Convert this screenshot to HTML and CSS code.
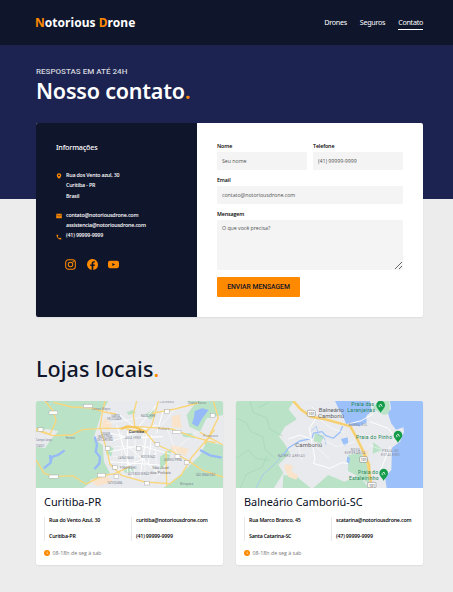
FILE: index.html
```html
<!DOCTYPE html>
<html lang="pt-BR">
<head>
<meta charset="utf-8">
<title>Notorious Drone</title>
<link rel="stylesheet" href="styles.css">
</head>
<body>
<header class="header">
  <a class="logo"><span>N</span>otorious <span>D</span>rone</a>
  <nav class="nav"><a>Drones</a><a>Seguros</a><a class="active">Contato</a></nav>
</header>
<main>
  <section class="hero">
    <p class="eyebrow">RESPOSTAS EM ATÉ 24H</p>
    <h1 class="title">Nosso contato<span>.</span></h1>
    <div class="contact">
      <div class="info">
        <h2>Informações</h2>
        <div class="row address">
          <svg viewBox="0 0 24 24"><path fill="#ff8a00" fill-rule="evenodd" d="M12 1a9 9 0 0 0-9 9c0 6 9 13 9 13s9-7 9-13a9 9 0 0 0-9-9zm0 5a3.5 3.5 0 1 1 0 7 3.5 3.5 0 0 1 0-7z"/></svg>
          <p>Rua dos Vento azul, 30<br>Curitiba - PR<br>Brasil</p>
        </div>
        <div class="row">
          <svg viewBox="0 0 24 24"><path fill="#ff8a00" d="M1 3h22v18H1z"/><path d="M3 7l9 6 9-6" fill="none" stroke="#0f152b" stroke-width="2"/></svg>
          <p>contato@notoriousdrone.com<br>assistencia@notoriousdrone.com</p>
        </div>
        <div class="row phone">
          <svg viewBox="0 0 24 24"><path fill="#ff8a00" d="M6.6 10.8a15 15 0 0 0 6.6 6.6l2.200-2.200c.3-.3.7-.4 1-.2 1.200.4 2.400.6 3.600.6.600 0 1 .4 1 1V21c0 .6-.4 1-1 1A18 18 0 0 1 2 4c0-.6.4-1 1-1h4.500c.6 0 1 .4 1 1 0 1.200.2 2.400.6 3.600.1.300 0 .700-.3 1z"/></svg>
          <p>(41) 99999-9999</p>
        </div>
        <div class="social">
          <svg viewBox="0 0 24 24" fill="none" stroke="#ff8a00" stroke-width="2.200"><rect x="1.500" y="1.500" width="21" height="21" rx="6"/><circle cx="12" cy="12" r="5"/><circle cx="18" cy="6" r=".6"/></svg>
          <svg viewBox="0 0 24 24"><path fill="#ff8a00" d="M24 12a12 12 0 1 0-13.900 11.900v-8.400H7.100V12h3V9.400c0-3 1.800-4.700 4.500-4.700 1.300 0 2.700.2 2.700.2v3h-1.500c-1.500 0-2 .9-2 1.900V12h3.400l-.5 3.500h-2.900v8.400A12 12 0 0 0 24 12z"/></svg>
          <svg viewBox="0 0 24 24"><path fill="#ff8a00" fill-rule="evenodd" d="M4 4h16q4 0 4 4v8q0 4-4 4H4q-4 0-4-4V8q0-4 4-4zm5.500 4.500v7l6-3.500z"/></svg>
        </div>
      </div>
      <form class="form">
        <label>Nome<input placeholder="Seu nome"></label>
        <label>Telefone<input placeholder="(41) 99999-9999"></label>
        <label class="wide">Email<input placeholder="contato@notoriousdrone.com"></label>
        <label class="wide">Mensagem<textarea placeholder="O que você precisa?"></textarea></label>
        <button type="button">ENVIAR MENSAGEM</button>
      </form>
    </div>
  </section>
  <section class="stores">
    <h2 class="title">Lojas locais<span>.</span></h2>
    <div class="cards">
      <article class="card">
        <svg class="map" viewBox="18 18 561 261" preserveAspectRatio="none">
          <rect x="18" y="18" width="561" height="261" fill="#bae2c7"/>
          <path fill="#e8eaed" d="M235 18H470L492 30 470 60 478 95 510 110 530 70 579 60V150L530 140 510 180 480 210 450 240 400 279H160L200 250 240 235 222 200 218 150 190 130 205 85 215 50zM18 112L50 102 85 108 62 135 45 160 18 155z"/>
          <path fill="#bae2c7" d="M390 185l35-25-8 35-27 30zM345 60l25-18 5 20-14 12zM455 115h32l8 15-35-5zM230 150l20 10-6 24-16-7zM290 52l20-8 8 10-23 6zM280 222l25-5 7 12-27 5z"/>
          <path fill="#fae3cb" d="M425 65l24-8 6 43-29-5zM425 150l52 12-10 20-42-15zM222 70l24 15-10 22-22-12zM180 255l48-14 22 20-50 12z"/>
          <path fill="#96baf7" d="M494 48l22-8 20 5-19 25-14 25-17-9 6-20z"/>
          <path fill="none" stroke="#96baf7" stroke-width="7" d="M194 125l7 25-4 20 13 16-2 20-15 16M104 166l-20 14-18 6-5 18-20 16M62 200l-2-20M510 165l30 16 35 7"/>
          <path fill="none" stroke="#fff" stroke-width="3" d="M380 30L322 100 292 110V230M240 115l70 15 88-5M240 170l90-18 90 25M260 90l50 160M350 115l-20 130M235 200l155 10M270 60l60 50M365 120l-10 90M290 150l100 90M400 45l-20 70M240 140l90-30M260 225l120-50M310 110l70-20"/>
          <path fill="none" stroke="#fff" stroke-width="1.500" d="M250 125h150M250 155h140M250 185h130M275 110v120M315 120v110M340 110l5 120M375 140l5 90M410 100l40 100M230 85l120-20M420 195l-60 70M445 30l-50 60M500 110l-60 50"/>
          <path fill="none" stroke="#f9d67c" stroke-width="4" d="M45 18l25 30 8 30-18 40-42-17M18 106l50 16 58-2 30-16 60-4h60l50-5 100 7 60 22 70 20M70 22l55 14 60 3 38 12 35 6M225 18l-8 35-7 45 20 65 10 45 35 33 70 20 75 5 33-25 33-55 40-47 28-35M320 18l-10 40 5 42M385 18l-20 75-17 18-58-8M348 113l30 35 45 20 50 28 45 30 61 20M408 168l2 106M365 55l70-13 70-18M550 18l15 50-40 80M18 195l25 40 30 10 55-3 40 25 50-25 37-6 45-22M510 112l69 38"/>
          <path fill="none" stroke="#f7c65c" stroke-width="7" d="M272 102l20-8 25 3 34 15"/>
          <g class="shield small"><rect x="57" y="48" width="26" height="10"/><rect x="160" y="28" width="28" height="10"/><rect x="24" y="98" width="15" height="11"/><rect x="57" y="240" width="28" height="10"/><rect x="427" y="106" width="26" height="10"/><rect x="202" y="235" width="24" height="11"/><rect x="226" y="154" width="14" height="12"/><rect x="319" y="154" width="14" height="12"/><rect x="375" y="143" width="14" height="12"/><rect x="404" y="44" width="14" height="12"/><rect x="541" y="55" width="14" height="12"/><rect x="435" y="178" width="15" height="12"/><rect x="463" y="197" width="14" height="12"/><rect x="248" y="211" width="15" height="12"/><rect x="252" y="238" width="14" height="12"/><rect x="343" y="259" width="15" height="11"/></g>
          <g class="place">
            <text x="48" y="21">Sé</text><text x="185" y="46" textLength="56">Campo Magro</text><text x="389" y="25" textLength="42">Colombo</text><text x="474" y="28" textLength="54">Quatro Barras</text>
            <text x="244" y="67">SANTA</text><text x="232" y="76">FELICIDADE</text><text x="333" y="65">BACACHERI</text><text x="384" y="105" textLength="34">Pinhais</text><text x="520" y="125" textLength="43">Piraquara</text>
            <text x="213" y="121">CIDADE</text><text x="204" y="129">INDUSTRIAL</text><text x="202" y="137">DE CURITIBA</text><text x="286" y="131">ÁGUA VERDE</text><text x="107" y="133">Ferraria</text><text x="18" y="138">Campo Largo</text><text x="18" y="155">ITAQUI</text>
            <text x="264" y="191">CAPÃO RASO</text><text x="333" y="190">BOQUEIRÃO</text><text x="270" y="221">PINHEIRINHO</text><text x="294" y="241">ALTO BOQUEIRÃO</text><text x="402" y="198">AFONSO PENA</text><text x="232" y="266">TATUQUARA</text><text x="450" y="271">Miringuava</text><text x="497" y="243">SÃO SEBASTIÃO</text>
          </g>
          <text class="mid" x="367" y="223">São José</text><text class="mid" x="360" y="236">dos Pinhais</text>
          <text class="city" x="296" y="113" textLength="46">Curitiba</text>
        </svg>
        <div class="card-body">
          <h3>Curitiba-PR</h3>
          <div class="details"><p>Rua do Vento Azul, 30<br>Curitiba-PR</p><p>curitiba@notoriousdrone.com<br>(41) 99999-9999</p></div>
          <p class="hours"><svg viewBox="0 0 24 24"><circle cx="12" cy="12" r="12" fill="#ff8a00"/><path d="M12 6v7l5 2" fill="none" stroke="#fff" stroke-width="2"/></svg>08-18h de seg à sab</p>
        </div>
      </article>
      <article class="card">
        <svg class="map" viewBox="18 18 561 261" preserveAspectRatio="none">
          <rect x="18" y="18" width="561" height="261" fill="#e8eaed"/>
          <path fill="#bae2c7" d="M18 18H192l-16 25 24 30-35 22-18 30 15 18 18 32-35 34 15 24-28 46H18zM160 240l40 5 42 34h-84zM295 240l48 20 45-18 28 37H250zM355 180l35-6 23 34 5 60-26-20-38-20zM445 18h33l2 36-18 6-35-20zM255 115l28 8-12 22-20-7zM430 142l28 22-30 12z"/>
          <path fill="none" stroke="#a4d7b4" stroke-width="2" d="M18 70l30 12 15 28 35 15 8 40 30 25M60 18l10 35 40 15 10 35 38 20M18 190l38-25 20 25 45 6M30 279l20-42 46-20 14-33M85 38l30-15"/>
          <path fill="#9cc0f9" d="M315 18H420L425 48 409 63 410 82 389 94 350 90 336 58 325 40zM480 18H579V279H470L465 246 484 225 486 158 510 140 522 110 520 97 498 104 483 84 474 55 483 42z"/>
          <path fill="#9cc0f9" d="M333 132l20-5 2 18-13 7zM352 184l8 5-3 20-7-10z"/>
          <path fill="none" stroke="#9cc0f9" stroke-width="4" d="M338 92l-8 20-20 18-22-8-12-12-25 4-6 16-35 8-34 20-16 23"/>
          <path fill="none" stroke="#9cc0f9" stroke-width="2" d="M160 174l-20 28-40 35-22 42M244 108l15-14 6 25 18 10 5 20"/>
          <path fill="none" stroke="#fff" stroke-width="3" d="M263 62l-25 38 7 38 10 55-5 12 50 15 35-17 20 3M175 132l35-12 40 15M336 92l58-15 35-20M420 80l55 20 15 20M480 155l-32 80M245 35l25 28"/>
          <path fill="none" stroke="#fff" stroke-width="1.500" d="M270 75l35 25 38 12M280 135l40 20 55-15M250 150l48 40M205 155l12 40M400 120l50 10M415 150l58 20"/>
          <path fill="#fae3cb" d="M165 207l24 5-5 18 20 10-5 14-23-8-12-24zM405 164l12 5-4 18-10-8z"/>
          <path fill="none" stroke="#f9d67c" stroke-width="8" d="M190 18l22 25 30 22 42 7 42 12 35 10 20 36 20 42 16 37 2 32 6 38M400 176l14 32 8 48"/>
          <path fill="none" stroke="#eebd57" stroke-width="1.500" d="M190 18l22 25 30 22 84 19 35 10 20 36 20 42 16 37 8 70"/>
          <g class="shield"><rect x="232" y="46" width="24" height="18" rx="3"/><rect x="389" y="185" width="23" height="17" rx="3"/><rect x="413" y="262" width="25" height="16" rx="3"/></g>
          <g class="road"><text x="235" y="60">101</text><text x="392" y="198">101</text><text x="417" y="275">101</text></g>
          <g class="big"><text x="266" y="51" textLength="76">Balneário</text><text x="264" y="69" textLength="78">Camboriú</text><text x="196" y="155" textLength="80">Camboriú</text></g>
          <g class="beach"><text x="364" y="32" textLength="68">Praia das</text><text x="352" y="50" textLength="83">Laranjeiras</text><text x="378" y="132" textLength="108">Praia do Pinho</text><text x="384" y="238" textLength="60">Praia do</text><text x="357" y="255" textLength="89">Estaleirinho</text></g>
          <g class="place wide-place"><text x="144" y="187" textLength="80">BAIRRO AREIAS</text><text x="356" y="94" textLength="56">BARRA SUL</text><text x="362" y="167" textLength="28">NOVA</text><text x="344" y="178" textLength="62">ESPERANÇA</text><text x="456" y="172" textLength="50">PRAIA DO</text><text x="453" y="184" textLength="56">ESTALEIRO</text></g>
          <g>
            <g transform="translate(452 31)"><path fill="#159c4b" d="M0 23C-4 13-13 9-13-1a13 13 0 0 1 26 0C13 9 4 13 0 23z"/><path d="M-6 2q5-9 10-2M-1-4l6 8M-6 4h5" fill="none" stroke="#fff" stroke-width="2"/></g>
            <g transform="translate(504 121)"><path fill="#159c4b" d="M0 23C-4 13-13 9-13-1a13 13 0 0 1 26 0C13 9 4 13 0 23z"/><path d="M-6 2q5-9 10-2M-1-4l6 8M-6 4h5" fill="none" stroke="#fff" stroke-width="2"/></g>
            <g transform="translate(461 235)"><path fill="#159c4b" d="M0 23C-4 13-13 9-13-1a13 13 0 0 1 26 0C13 9 4 13 0 23z"/><path d="M-6 2q5-9 10-2M-1-4l6 8M-6 4h5" fill="none" stroke="#fff" stroke-width="2"/></g>
          </g>
        </svg>
        <div class="card-body">
          <h3>Balneário Camboriú-SC</h3>
          <div class="details"><p>Rua Marco Branco, 45<br>Santa Catarina-SC</p><p>scatarina@notoriousdrone.com<br>(47) 99999-9999</p></div>
          <p class="hours"><svg viewBox="0 0 24 24"><circle cx="12" cy="12" r="12" fill="#ff8a00"/><path d="M12 6v7l5 2" fill="none" stroke="#fff" stroke-width="2"/></svg>08-18h de seg à sab</p>
        </div>
      </article>
    </div>
  </section>
</main>
</body>
</html>
```
FILE: styles.css
```css
* { box-sizing: border-box; margin: 0; padding: 0; }
body { background: #ececec; color: #0f152b; font: 5.300px/10px "Open Sans", sans-serif; letter-spacing: -.1px; height: 592px; overflow: hidden; }
svg { display: block; letter-spacing: 0; }
.header { height: 45px; padding: 0 30px 0 35px; display: flex; align-items: center; justify-content: space-between; background: #0f152b; color: #fff; }
.logo { font: bold 12px/20px "Noto Sans", sans-serif; letter-spacing: .04px; }
.logo span, .title span { color: #ff8a00; }
.nav { display: flex; gap: 13px; padding-top: 2px; font: 7.200px/11px "Noto Sans", sans-serif; letter-spacing: -.3px; }
.nav a { height: 13px; }
.nav .active { border-bottom: 1px solid #fff; }
.hero { height: 154px; padding: 21px 30px 0 36px; background: #1c2350; }
.eyebrow { font: 500 8px/10px Roboto, sans-serif; color: #d5d6df; letter-spacing: 0.02px; padding-top: 1px; }
.title { font: 600 21.500px/30px "Noto Sans", sans-serif; letter-spacing: -.2px; }
.hero .title { color: #fff; margin-top: -1px; }
.contact { margin-top: 17px; height: 194px; display: flex; background: #fff; border-radius: 2px; overflow: hidden; box-shadow: 0 1px 2px #0001; }
.info { width: 161px; padding: 19px 20px; color: #fff; background: #0f152b; font-weight: 600; letter-spacing: -.18px; }
.info h2 { font: 500 7.200px/11px "Noto Sans", sans-serif; margin-bottom: 17px; }
.row { display: flex; gap: 4px; }
.row svg { width: 6px; height: 6px; margin-top: 3px; }
.row p { margin-top: -.5px; }
.row.address { margin-bottom: 9px; line-height: 10.500px; }
.row.phone { margin-top: 1px; }
.social { display: flex; gap: 10.500px; margin: 19px 0 0 9px; }
.social svg { width: 11px; height: 11px; }
.form { flex: 1; padding: 19px 20px; display: grid; grid-template-columns: 90px 90px; gap: 6px; align-content: start; }
.form label { line-height: 10px; font-weight: 600; height: 28px; margin-top: -1px; margin-bottom: 1px; color: #000; }
.form .wide { grid-column: span 2; }
.form .wide:nth-child(4) { height: 61px; }
.form input, .form textarea { display: block; width: 100%; height: 18px; margin-top: 1px; padding: 0 5px 1px; border: 0; border-radius: 1px; background: #f4f4f4; font: 5.300px/10px "Open Sans", sans-serif; letter-spacing: -.05px; }
.form textarea { height: 50px; padding-top: 3px; resize: both; }
.form ::placeholder { color: #555; opacity: 1; }
.form button { width: 83px; height: 20px; border: 0; border-radius: 1px; background: #ff8a00; color: #0f152b; font: 500 6.800px/20px Roboto, sans-serif; letter-spacing: -.03px; }
.stores { padding: 155px 30px 0 36px; }
.stores .title { font-weight: 500; letter-spacing: .05px; }
.cards { margin-top: 17px; display: grid; grid-template-columns: 1fr 1fr; gap: 13px; }
.card { height: 164px; background: #fff; border-radius: 2px; overflow: hidden; box-shadow: 0 1px 2px #0001; }
.map { width: 100%; height: 87px; font-family: Roboto, sans-serif; }
.shield { fill: #fff; stroke: #777; stroke-width: 1.500; }
.shield.small { stroke: #999; stroke-width: 1.200; }
.place { font-size: 8px; fill: #7d8594; }
.wide-place { font-size: 9px; }
.mid { font-size: 12px; fill: #777; }
.city { font-size: 13px; font-weight: 600; fill: #444; }
.big { font-size: 18px; fill: #626267; }
.beach { font-size: 15px; fill: #218552; }
.road { font-size: 11px; fill: #444; }
.card-body { padding: 6px 8px; }
.card h3 { font: 400 10.900px/16px "Noto Sans", sans-serif; letter-spacing: 0; color: #080c1c; }
.details { margin-top: 7px; display: grid; grid-template-columns: 1fr 84px; line-height: 16px; }
.details p { height: 24px; padding-left: 4px; border-left: 1px solid #e8e8e8; font-weight: 600; color: #000; letter-spacing: -.2px; }
.details p::before { content: ""; display: block; margin-top: -5px; }
.hours { display: flex; align-items: center; gap: 2.500px; margin-top: 7px; color: #777; letter-spacing: 0; }
.hours svg { width: 6px; height: 6px; }
.details p { display: flow-root; }
```
